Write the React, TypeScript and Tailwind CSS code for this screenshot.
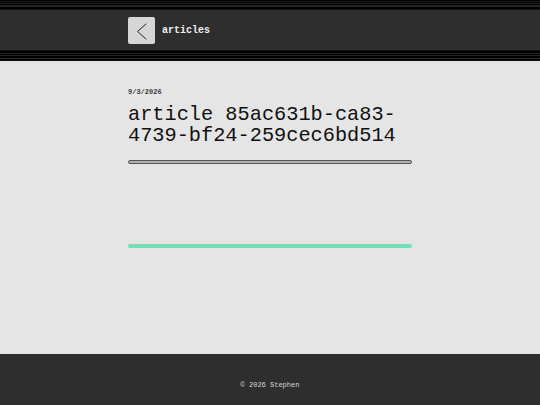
const mono = { fontFamily: '"Liberation Mono", "DejaVu Sans Mono", monospace' }

// alternating 1px rules that frame the top bar
const TOP_RULES = ['#000', '#1c1c1c', '#000', '#262626', '#000', '#262626', '#2a2a2a', '#000', '#000', '#111']
const BOTTOM_RULES = ['#111', '#000', '#000', '#222', '#000', '#262626', '#000', '#000', '#262626', '#000', '#0c0c0c']

function Rules({ colors }: { colors: string[] }) {
  return (
    <div className="flex flex-col">
      {colors.map((c, i) => (
        <div key={i} className="h-px w-full" style={{ backgroundColor: c }} />
      ))}
    </div>
  )
}

function BackChevron() {
  return (
    <svg width="27" height="27" viewBox="0 0 27 27" fill="none">
      <polyline points="18,7 9.5,14.5 18,22" stroke="#222" strokeWidth="1" strokeLinecap="round" strokeLinejoin="round" />
    </svg>
  )
}

export default function App() {
  return (
    <div className="flex h-screen flex-col bg-[#e5e5e5]" style={mono}>
      <header className="bg-[#2e2e2e]">
        <Rules colors={TOP_RULES} />
        <div className="mx-auto flex h-[40px] w-[284px] items-center gap-[7px]">
          <button className="flex h-[27px] w-[27px] items-center justify-center rounded-[2px] bg-[#d6d6d6]">
            <BackChevron />
          </button>
          <span className="text-[10px] font-bold text-[#f0f0f0]">articles</span>
        </div>
        <Rules colors={BOTTOM_RULES} />
      </header>

      <main className="flex-1">
        <div className="mx-auto w-[284px] pt-[27px]">
          <p className="text-[7px] font-bold leading-[9px] text-[#3a3a3a]">9/3/2026</p>
          <h1 className="mt-[7px] text-[20.3px] leading-[21px] text-[#111]">
            article 85ac631b-ca83-4739-bf24-259cec6bd514
          </h1>
          <div className="mt-[14px] h-[4px] rounded-full border border-[#555] bg-[#b0b0b0]" />
          <div className="mt-[80px] h-[4px] rounded-full bg-[#6ee2b7]" />
        </div>
      </main>

      <footer className="flex h-[51px] justify-center bg-[#2e2e2e] pt-[27px]">
        <span className="text-[7px] leading-[9px] text-[#d8d8d8]">© 2026 Stephen</span>
      </footer>
    </div>
  )
}
